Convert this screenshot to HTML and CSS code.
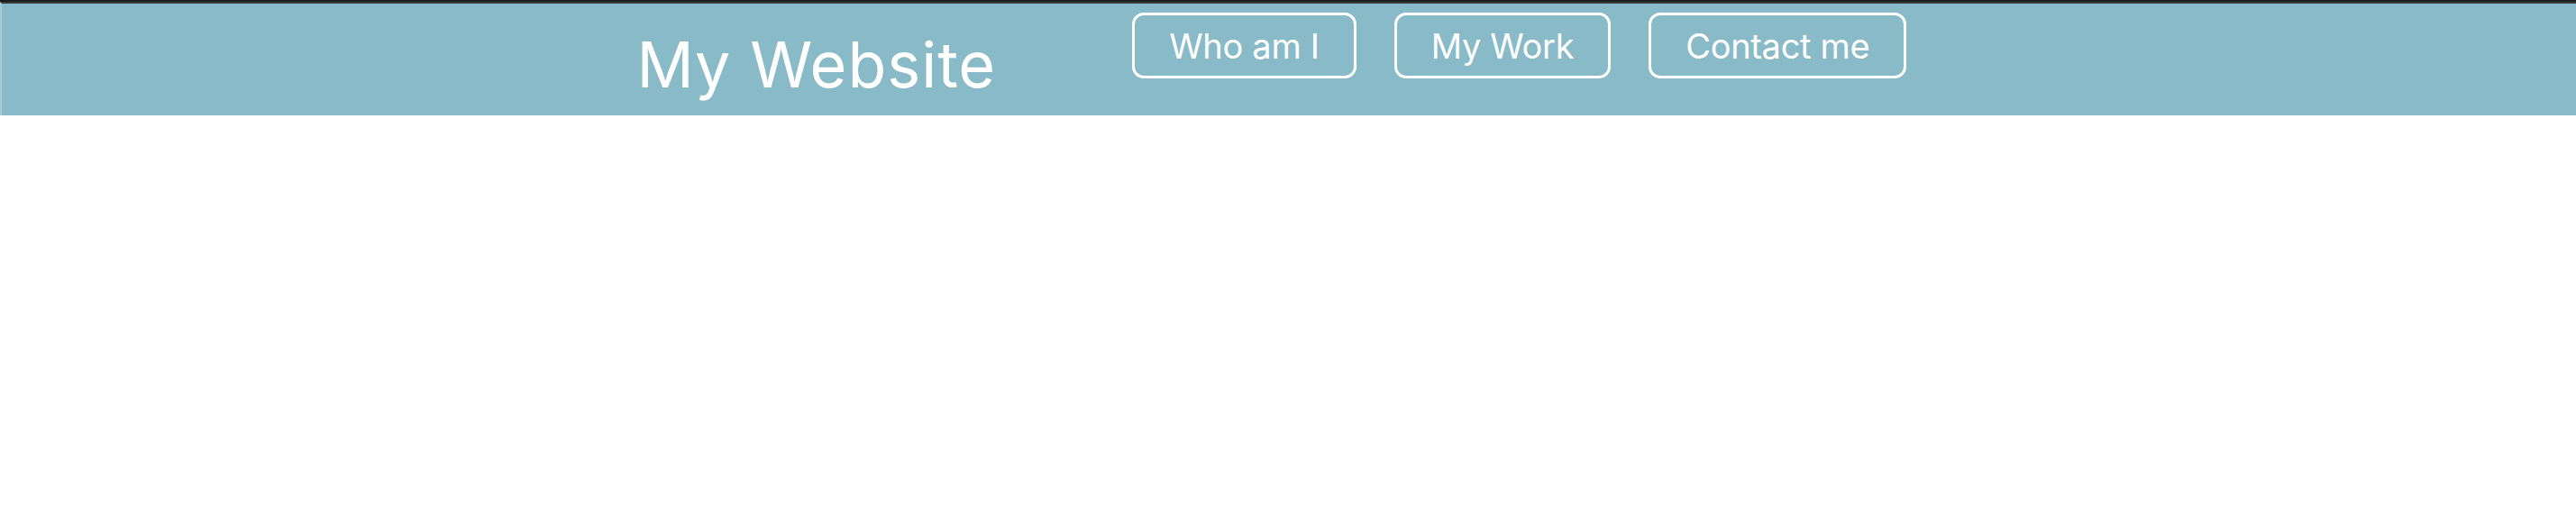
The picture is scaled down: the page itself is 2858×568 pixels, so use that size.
FILE: index.html
```html
<!DOCTYPE html>
<html lang="en">
<head>
<meta charset="utf-8">
<title>My Website</title>
<link rel="stylesheet" href="styles.css">
</head>
<body>
<header class="site-header">
  <h1 class="site-title">My Website</h1>
  <nav class="site-nav">
    <a class="nav-btn" href="#about">Who am I</a>
    <a class="nav-btn" href="#work">My Work</a>
    <a class="nav-btn" href="#contact">Contact me</a>
  </nav>
</header>
<main class="content"></main>
</body>
</html>
```
FILE: styles.css
```css
html, body {
  margin: 0;
  padding: 0;
  background: #ffffff;
}
body {
  font-family: Inter, "Noto Sans", "Liberation Sans", sans-serif;
  border-top: 2px solid #1b1b1b;
}
.site-header {
  box-sizing: border-box;
  height: 126px;
  background: #88bac8;
  border-top: 2px solid #3a3a3a;
  border-left: 2px solid #a4cad5;
  display: flex;
  justify-content: center;
  align-items: flex-start;
  padding-right: 38px;
}
.site-title {
  margin: 0;
  padding-top: 26px;
  font-size: 70px;
  font-weight: 400;
  line-height: 84px;
  color: #ffffff;
  letter-spacing: 1px;
}
.site-nav {
  display: flex;
  gap: 42px;
  margin-left: 151px;
  padding-top: 10px;
}
.nav-btn {
  box-sizing: border-box;
  height: 73px;
  display: flex;
  align-items: center;
  justify-content: center;
  padding: 0 38px;
  border: 3px solid #ffffff;
  border-radius: 13px;
  color: #ffffff;
  text-decoration: none;
  font-size: 38px;
  font-weight: 400;
  letter-spacing: -0.3px;
}
```
